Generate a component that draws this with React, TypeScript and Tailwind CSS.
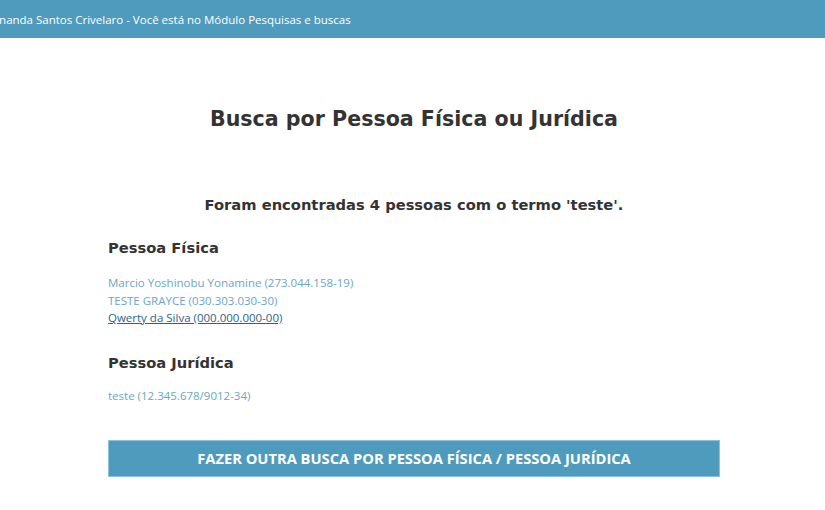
import React from "react";

const head = { fontFamily: "'DejaVu Sans', sans-serif" };
const body = { fontFamily: "'Open Sans', sans-serif" };

export default function App() {
  return (
    <div className="min-h-[510px] w-[825px] bg-white overflow-hidden" style={body}>
      <div className="h-[38px] bg-[#4f9bbd] flex items-center overflow-hidden">
        <span className="ml-[-18px] text-[11.5px] text-white whitespace-nowrap pt-[1px]">
          Fernanda Santos Crivelaro - Você está no Módulo Pesquisas e buscas
        </span>
      </div>
      <div className="w-[612px] ml-[108px]">
        <h1 className="mt-[66px] text-center text-[20.6px] leading-[30px] font-bold text-[#333]" style={head}>
          Busca por Pessoa Física ou Jurídica
        </h1>
        <h2 className="mt-[60px] text-center text-[14.7px] leading-[22px] font-bold text-[#333]" style={head}>
          Foram encontradas 4 pessoas com o termo 'teste'.
        </h2>
        <h3 className="mt-[21px] text-[14.7px] leading-[22px] font-bold text-[#333]" style={head}>
          Pessoa Física
        </h3>
        <div className="mt-[15px] flex flex-col text-[11.5px] leading-[17.5px]">
          <a className="text-[#6aa6c9]">Marcio Yoshinobu Yonamine (273.044.158-19)</a>
          <a className="text-[#6aa6c9]">TESTE GRAYCE (030.303.030-30)</a>
          <a className="text-[#2d5f8f] underline w-fit">Qwerty da Silva (000.000.000-00)</a>
        </div>
        <h3 className="mt-[25px] text-[14.7px] leading-[22px] font-bold text-[#333]" style={head}>
          Pessoa Jurídica
        </h3>
        <div className="mt-[13px] text-[11.5px] leading-[17.5px]">
          <a className="text-[#6aa6c9]">teste (12.345.678/9012-34)</a>
        </div>
        <div className="mt-[36px] h-[37px] bg-[#4f9bbd] border border-[#8cc3db] flex items-center justify-center">
          <span className="text-white font-bold text-[14.7px]">
            FAZER OUTRA BUSCA POR PESSOA FÍSICA / PESSOA JURÍDICA
          </span>
        </div>
      </div>
    </div>
  );
}
